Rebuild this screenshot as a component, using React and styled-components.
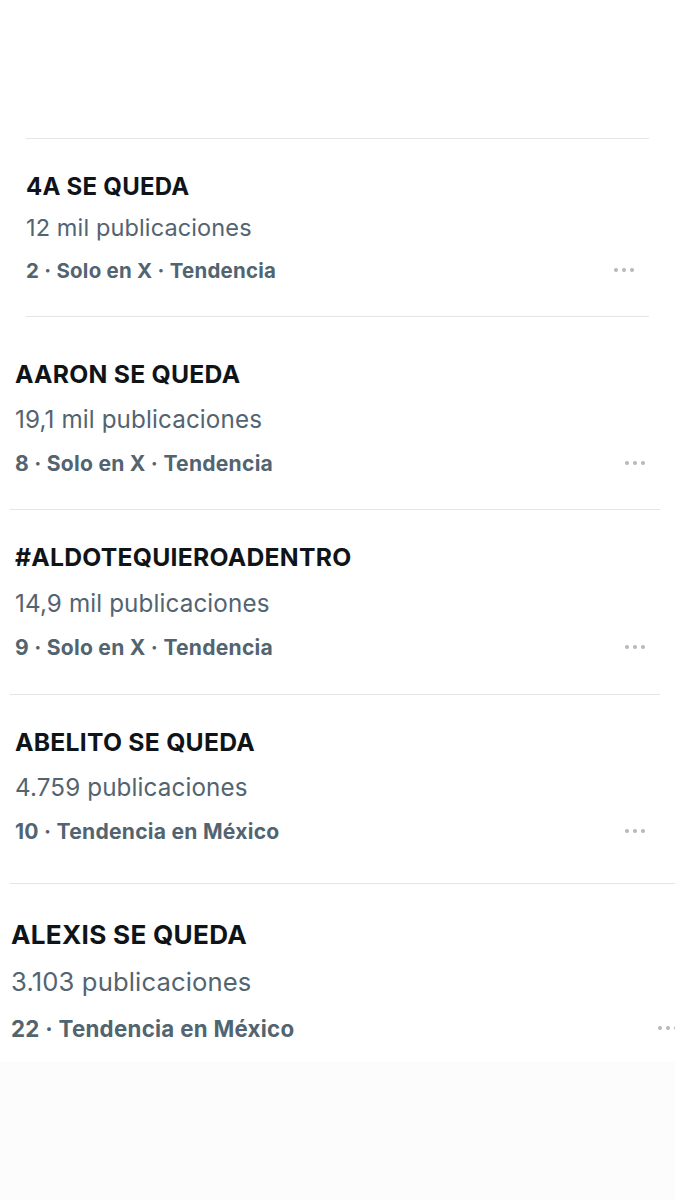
import React from "react";
import styled, { createGlobalStyle } from "styled-components";

const Global = createGlobalStyle`
  html, body { margin: 0; padding: 0; background: #ffffff; }
  body { font-family: Inter, "Noto Sans", "Liberation Sans", sans-serif; -webkit-font-smoothing: antialiased; }
`;

const Page = styled.div`
  width: 675px;
  min-height: 1200px;
  display: flex;
  flex-direction: column;
  background: #ffffff;
  overflow: hidden;
`;

const TopSpace = styled.div`
  height: 138px;
  flex: none;
`;

const Rule = styled.div`
  height: 1px;
  background: #e3e5e7;
  margin-left: ${(p) => p.$left}px;
  margin-right: ${(p) => p.$right}px;
  flex: none;
`;

const Entry = styled.section`
  display: flex;
  flex-direction: column;
  padding-left: ${(p) => p.$left}px;
  padding-top: ${(p) => p.$top}px;
  padding-bottom: ${(p) => p.$bottom}px;
  font-size: ${(p) => p.$scale * 16}px;
`;

const Line = styled.div`
  height: 40px;
  display: flex;
  align-items: center;
  white-space: nowrap;
  margin-top: ${(p) => p.$gap || 0}px;
`;

const Title = styled.span`
  font-size: 1.5em;
  font-weight: 700;
  color: #0f1419;
  letter-spacing: 0.01em;
`;

const Count = styled.span`
  font-size: 1.47em;
  font-weight: 400;
  color: #536471;
  letter-spacing: 0.005em;
`;

const MetaLine = styled(Line)`
  justify-content: space-between;
  margin-right: ${(p) => p.$right}px;
`;

const Meta = styled.span`
  font-size: 1.28em;
  font-weight: 700;
  color: #536471;
  letter-spacing: 0.012em;
`;

const Dots = styled.span`
  display: flex;
  gap: 4px;
  align-items: center;
`;

const Dot = styled.i`
  width: 4px;
  height: 4px;
  border-radius: 50%;
  background: #b4b9be;
`;

const Tail = styled.div`
  flex: 1;
  background: #fcfcfc;
`;

const trends = [
  { title: "4A SE QUEDA", count: "12 mil publicaciones", meta: "2 · Solo en X · Tendencia",
    rule: [26, 26], left: 26, top: 27, g1: 1, g2: 3, bottom: 26, right: 41, scale: 1 },
  { title: "AARON SE QUEDA", count: "19,1 mil publicaciones", meta: "8 · Solo en X · Tendencia",
    rule: [26, 26], left: 15, top: 37, g1: 5, g2: 4, bottom: 26, right: 30, scale: 1.03 },
  { title: "#ALDOTEQUIEROADENTRO", count: "14,9 mil publicaciones", meta: "9 · Solo en X · Tendencia",
    rule: [10, 15], left: 15, top: 27, g1: 6, g2: 4, bottom: 27, right: 30, scale: 1.03 },
  { title: "ABELITO SE QUEDA", count: "4.759 publicaciones", meta: "10 · Tendencia en México",
    rule: [10, 15], left: 15, top: 27, g1: 5, g2: 4, bottom: 32, right: 30, scale: 1.03 },
  { title: "ALEXIS SE QUEDA", count: "3.103 publicaciones", meta: "22 · Tendencia en México",
    rule: [10, 0], left: 11, top: 30, g1: 7, g2: 7, bottom: 14, right: -3, scale: 1.09 },
];

export default function App() {
  return (
    <Page>
      <Global />
      <TopSpace />
      {trends.map((t) => (
        <React.Fragment key={t.title}>
          <Rule $left={t.rule[0]} $right={t.rule[1]} />
          <Entry $left={t.left} $top={t.top} $bottom={t.bottom} $scale={t.scale}>
            <Line>
              <Title>{t.title}</Title>
            </Line>
            <Line $gap={t.g1}>
              <Count>{t.count}</Count>
            </Line>
            <MetaLine $gap={t.g2} $right={t.right}>
              <Meta>{t.meta}</Meta>
              <Dots>
                <Dot />
                <Dot />
                <Dot />
              </Dots>
            </MetaLine>
          </Entry>
        </React.Fragment>
      ))}
      <Tail />
    </Page>
  );
}
